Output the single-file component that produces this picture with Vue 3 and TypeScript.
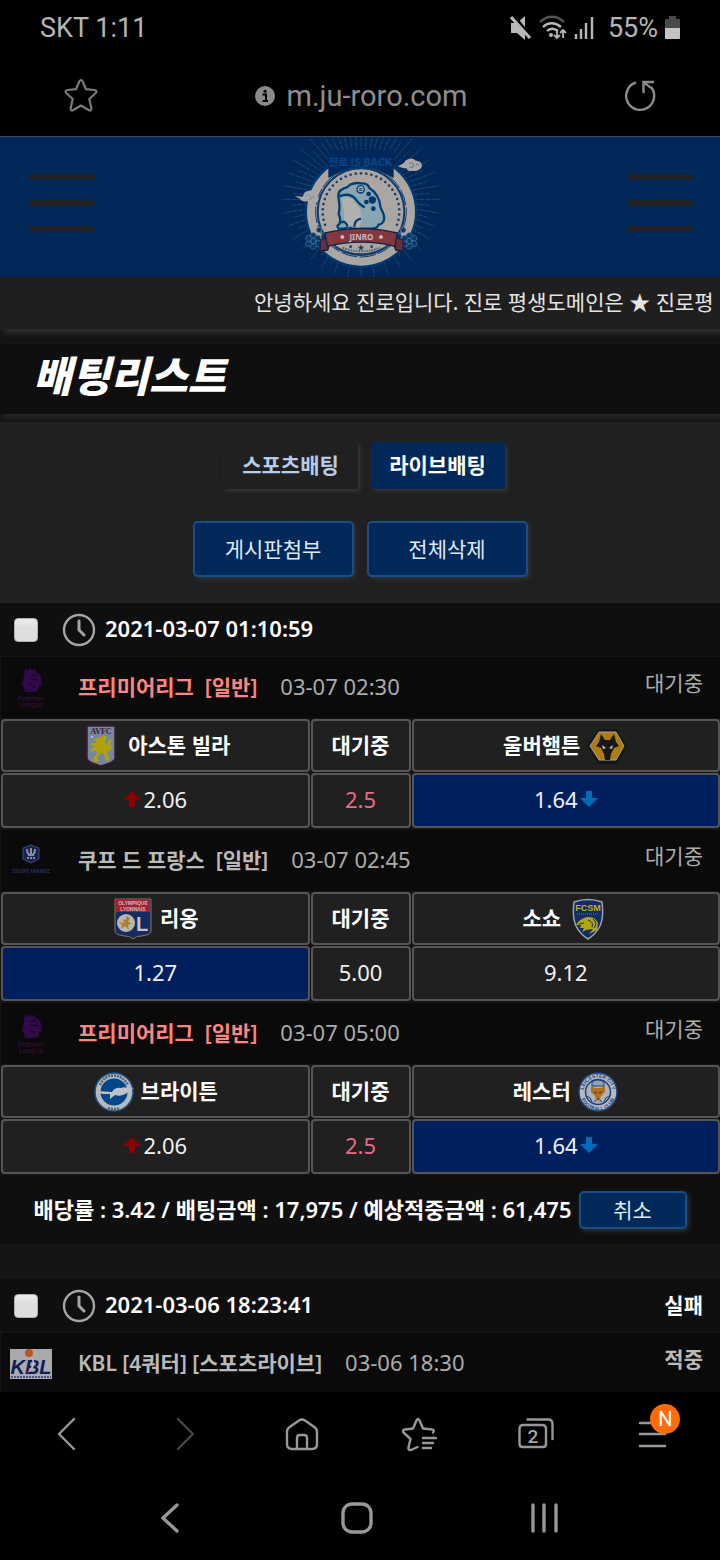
<script setup lang="ts">
type Trend = 'up' | 'down'
type Side = 'home' | 'draw' | 'away'

interface Odd {
  side: Side
  value: string
  trend?: Trend
  line?: boolean
  picked?: boolean
}

interface Match {
  id: number
  badge: string
  league: string
  highlight: boolean
  time: string
  status: string
  home: { name: string; crest: string }
  away: { name: string; crest: string }
  odds: Odd[]
}

const handicap: Odd[] = [
  { side: 'home', value: '2.06', trend: 'up' },
  { side: 'draw', value: '2.5', line: true },
  { side: 'away', value: '1.64', trend: 'down', picked: true },
]

const matches: Match[] = [
  {
    id: 1,
    badge: 'premier',
    league: '프리미어리그\u00a0 [일반]',
    highlight: true,
    time: '03-07 02:30',
    status: '대기중',
    home: { name: '아스톤 빌라', crest: 'villa' },
    away: { name: '울버햄튼', crest: 'wolves' },
    odds: handicap,
  },
  {
    id: 2,
    badge: 'coupe',
    league: '쿠프 드 프랑스\u00a0 [일반]',
    highlight: false,
    time: '03-07 02:45',
    status: '대기중',
    home: { name: '리옹', crest: 'lyon' },
    away: { name: '소쇼', crest: 'sochaux' },
    odds: [
      { side: 'home', value: '1.27', picked: true },
      { side: 'draw', value: '5.00' },
      { side: 'away', value: '9.12' },
    ],
  },
  {
    id: 3,
    badge: 'premier',
    league: '프리미어리그\u00a0 [일반]',
    highlight: true,
    time: '03-07 05:00',
    status: '대기중',
    home: { name: '브라이튼', crest: 'brighton' },
    away: { name: '레스터', crest: 'leicester' },
    odds: handicap,
  },
]

const polar = (cx: number, cy: number, r: number, deg: number) => {
  const a = (deg * Math.PI) / 180
  return { x: cx + r * Math.cos(a), y: cy + r * Math.sin(a) }
}

// Sunburst behind the emblem
const rays = Array.from({ length: 72 }, (_, i) => {
  const a = polar(270, 208, 140, i * 5)
  const b = polar(270, 208, i % 2 ? 205 : 236, i * 5)
  return { x1: a.x, y1: a.y, x2: b.x, y2: b.y }
})

// Row of small stars inside the emblem ring
const studs = Array.from({ length: 29 }, (_, i) => polar(270, 245, 115, 160 + i * (220 / 28)))
const petals = [0, 60, 120, 180, 240, 300]
</script>

<template>
  <div class="screen">
    <header class="status">
      <span>SKT 1:11</span>
      <div class="status-icons">
        <svg width="22" height="24" viewBox="0 0 22 24" aria-hidden="true">
          <path d="M1 7h6l8-7v24l-8-7H1z" fill="#b8b8b8" />
          <path d="M4 0l18 22" stroke="#000" stroke-width="3" />
          <path d="M1 1l19 21" stroke="#b8b8b8" stroke-width="3" />
        </svg>
        <svg width="28" height="26" viewBox="0 0 28 26" fill="none" stroke="#b8b8b8" stroke-width="2.4" aria-hidden="true">
          <path d="M1 7C8 0 18 0 25 7" stroke="#555" />
          <path d="M4 12c5-5 12-5 18 0M8 16c3-3 7-3 11 0" />
          <circle cx="12" cy="20" r="2" fill="#b8b8b8" stroke="none" />
          <path d="M18 15v8M15 20l3 3 3-3M24 23v-8M21 18l3-3 3 3" stroke-width="1.8" />
        </svg>
        <svg width="20" height="24" viewBox="0 0 20 24" stroke="#b8b8b8" stroke-width="2.4" aria-hidden="true">
          <path d="M2 18v5M7 13v10M12 7v16M18 1v22" />
        </svg>
        <span class="battery-text">55%</span>
        <svg width="15" height="24" viewBox="0 0 15 24" aria-hidden="true">
          <path d="M4 0h7v3H4zM0 3h15v10H0z" fill="#4a4a4a" />
          <path d="M0 12h15v10q0 1-1 1H1q-1 0-1-1z" fill="#c4c4c4" />
        </svg>
      </div>
    </header>

    <div class="urlbar">
      <button class="icon-btn" aria-label="즐겨찾기 추가">
        <svg width="36" height="36" viewBox="0 0 36 36" fill="none" stroke="#7a7a7a" stroke-width="2.2" stroke-linejoin="round" aria-hidden="true">
          <path d="M16.300 3.500Q18 0.500 19.700 3.500L23 11.200L31.500 12Q35 12.700 32.500 15.200L26.300 21L28.300 30Q28.600 33.600 25.500 32L18 27.500L10.500 32Q7.400 33.600 7.700 30L9.700 21L3.500 15.200Q1 12.700 4.500 12L13 11.200Z" />
        </svg>
      </button>
      <div class="address">
        <svg width="20" height="20" viewBox="0 0 20 20" aria-hidden="true">
          <circle cx="10" cy="10" r="10" fill="#8a8a8a" />
          <circle cx="10" cy="5.300" r="1.600" fill="#000" />
          <path d="M7.500 8.500h3.500v6.500M7.500 15h5.500" fill="none" stroke="#000" stroke-width="2" />
        </svg>
        <span>m.ju-roro.com</span>
      </div>
      <button class="icon-btn" aria-label="새로고침">
        <svg width="34" height="34" viewBox="0 0 34 34" fill="none" stroke="#8c8c8c" stroke-width="2.400" aria-hidden="true">
          <path d="M13 3.500A14 14 0 1 0 28 8M20.500 14V3H31M21 4q4 2 7 5" />
        </svg>
      </button>
    </div>

    <main class="page">
      <div class="masthead">
        <button class="burger" aria-label="메뉴"><i></i><i></i><i></i></button>
        <svg class="emblem" width="180" height="140" viewBox="0 21 540 420" role="img" aria-label="JINRO">
          <g stroke="#486684" stroke-width="3" stroke-dasharray="15 3" opacity=".5">
            <line v-for="(r, i) in rays" :key="i" v-bind="r" />
          </g>
          <circle cx="270" cy="245" r="169" fill="#003a72" />
          <circle cx="270" cy="245" r="162" fill="#aca6a3" />
          <path d="M172 60h196v84q-98-56-196 0z" fill="#00295b" />
          <circle cx="270" cy="245" r="130" fill="#aca6a3" stroke="#0b3c70" stroke-width="6" />
          <circle cx="270" cy="245" r="136" fill="none" stroke="#0b3c70" stroke-width="3" stroke-dasharray="50 6" />
          <circle v-for="(s, i) in studs" :key="i" :cx="s.x" :cy="s.y" r="4" fill="#1b4069" />
          <text x="268" y="108" text-anchor="middle" class="arch">진로 IS BACK</text>
          <path d="M380 108q18-4 25-18 20-10 29 2 22 0 18 20-10 14-28 10-14 4-18-8-14 2-26-6z" fill="#a9a7a7" />
          <path d="M414 102q9-8 13 2t-10 8M435 103q7-3 8 4" fill="none" stroke="#5c7391" stroke-width="3" />
          <path d="M71 198l24 2q4-18 20-18 17-5 23 10 10 16-2 26-18 6-27-4-18 2-22-8z" fill="#a9a7a7" />
          <path d="M104 200q8-10 15 0t-8 9M123 199q8 0 7 8" fill="none" stroke="#8090a4" stroke-width="3" />
          <path d="M203 207q-6-22 14-31 13-3 22-13 20-6 32-3 20-1 24 14 30 18 34 60 13 22 10 36-4 12-16 14-4 12-20 12h-58q-8 0-12-8-6 8-14 8h-16q-9-8 3-15 4-16-3-30 5-18 0-44z" fill="#8aa5b2" stroke="#003e73" stroke-width="7" stroke-linejoin="round" />
          <path d="M212 204q28-9 40 14 21 24 20 46l-6 28q-18 2-24-8-4 8-14 8-10-12-8-32-2-28-8-56z" fill="#b2afae" />
          <path d="M205 199q30-12 48 7 12 18 28 26M210 278q13-9 20 12M250 290q0-20 20-24" fill="none" stroke="#003e73" stroke-width="7" />
          <circle cx="269" cy="178" r="11" fill="#a4b2b6" stroke="#003e73" stroke-width="4" />
          <path d="M264 176h10M264 181h10" stroke="#003e73" stroke-width="3" />
          <g fill="#00396d"><circle cx="293" cy="192" r="7" /><circle cx="304" cy="210" r="11" /><circle cx="286" cy="216" r="7" /><circle cx="307" cy="236" r="7" /></g>
          <path d="M190 348q80 48 160 0" fill="none" stroke="#16456f" stroke-width="4" />
          <path d="M215 353q55 22 112 0" fill="none" stroke="#47617c" stroke-width="5" stroke-dasharray="5 3" />
          <g v-for="x in [127, 415]" :key="x" :transform="`translate(${x} 333)`">
            <ellipse v-for="p in petals" :key="p" :transform="`rotate(${p})`" cx="0" cy="-15" rx="9" ry="10" fill="#053c70" stroke="#4f6e8c" stroke-width="2" />
            <circle r="8" fill="#053c70" stroke="#899dae" stroke-width="3" stroke-dasharray="3 2" />
          </g>
          <g fill="#08396e" stroke="#7d8fa0" stroke-width="2"><circle cx="144" cy="300" r="8" /><circle cx="160" cy="319" r="10" /><circle cx="397" cy="300" r="8" /><circle cx="382" cy="319" r="10" /></g>
          <path d="M148 330l28-12v24l-6 18q-12 0-23 5zM396 330l-28-12v24l6 18q12 0 23 5z" fill="#6b2d39" stroke="#0d2547" stroke-width="4" />
          <path d="M162 309q108-26 217 0l-7 40q-101-25-203 0z" fill="#853740" stroke="#0d2547" stroke-width="4" />
          <circle cx="214" cy="321" r="6" fill="#c5b9b7" /><circle cx="330" cy="321" r="6" fill="#c5b9b7" />
          <text x="271" y="329" text-anchor="middle" class="ribbon">JINRO</text>
          <path d="M270 343l3 7h7l-6 5 2 7-6-4-6 4 2-7-6-5h7z" fill="#123c6b" />
          <circle cx="239" cy="350" r="4" fill="#123c6b" /><circle cx="302" cy="350" r="4" fill="#123c6b" />
        </svg>
        <button class="burger" aria-label="내 정보"><i></i><i></i><i></i></button>
      </div>

      <div class="notice">안녕하세요 진로입니다. 진로 평생도메인은 ★ 진로평</div>
      <div class="title"><h1>배팅리스트</h1></div>

      <section class="controls">
        <div class="tabs">
          <button class="tab">스포츠배팅</button>
          <button class="tab active">라이브배팅</button>
        </div>
        <div class="actions">
          <button class="btn large">게시판첨부</button>
          <button class="btn large">전체삭제</button>
        </div>
      </section>

      <section class="slip">
        <div class="slip-head">
          <input id="slip-1" type="checkbox" />
          <svg width="34" height="34" viewBox="0 0 34 34" fill="none" stroke="#a5a5a5" aria-hidden="true">
            <circle cx="17" cy="17" r="15" stroke-width="2.400" /><path d="M17 8v9l5 5" stroke-width="3" stroke-linecap="round" />
          </svg>
          <label for="slip-1">2021-03-07 01:10:59</label>
        </div>

        <article v-for="m in matches" :key="m.id">
          <div class="league">
            <svg v-if="m.badge === 'premier'" class="badge" viewBox="0 0 42 42" aria-hidden="true">
              <path d="M15 1l2 3 3-3 2 3 3-3 0 4q7 2 6 8l1 5-3 1-1 5-6 1-7 0-1-4-2-4 2-8z" fill="#32094a" />
              <path d="M21 8q5-1 7 2M21 12l6 1M19 17q5 1 6 4" fill="none" stroke="#0d0812" stroke-width="1" />
              <text x="21" y="34" text-anchor="middle" class="tiny premier">Premier</text>
              <text x="21" y="40" text-anchor="middle" class="tiny premier">League</text>
            </svg>
            <svg v-else class="badge" viewBox="0 0 42 42" aria-hidden="true">
              <path d="M13 8l8-3 8 3v11l-8 4-8-4z" fill="#142254" stroke="#444a6c" />
              <path d="M17 9q0 6 4 6t4-6M21 8v7M18 15h6" fill="none" stroke="#8a8ea5" stroke-width="2" />
              <path d="M17 18h8" stroke="#8a8ea5" stroke-width="2" stroke-dasharray="2 1" />
              <text x="21" y="33" text-anchor="middle" class="tiny coupe">COUPE FRANCE</text>
            </svg>
            <strong :class="{ hot: m.highlight }">{{ m.league }}</strong>
            <time>{{ m.time }}</time>
            <span class="state">{{ m.status }}</span>
          </div>
          <table>
            <colgroup><col /><col class="mid" /><col /></colgroup>
            <thead>
              <tr>
                <th scope="col">
                  <div class="team">
                    <svg v-if="m.home.crest === 'villa'" class="crest" viewBox="0 0 42 42" aria-hidden="true">
                      <path d="M7 1h28v32q0 4-14 8-14-4-14-8z" fill="#71889e" stroke="#431931" stroke-width="1.500" />
                      <text x="21" y="9" text-anchor="middle" class="avfc">AVFC</text>
                      <path d="M20 12q5-3 7 1l-2 4 2 3 2-5 4-1-3 5 2 4-3 4-2-3 1 6 2 5-4 1-2-7-4-1-3 5 2 3-5 1-1-3 4-6-1-3-4 2-2-2 6-4-5 0 0-3 6 0-3-4 3-1z" fill="#b1a10c" />
                      <circle cx="12" cy="12" r="1" fill="#cbd1d1" />
                    </svg>
                    <svg v-else-if="m.home.crest === 'lyon'" class="crest" viewBox="0 0 42 42" aria-hidden="true">
                      <path d="M3 1h36v32q0 4-10 5-5 0-8 3-3-3-8-3-10-1-10-5z" fill="#142c61" stroke="#85774e" />
                      <path d="M4 2h34v12H4z" fill="#a5202c" />
                      <text x="21" y="7" text-anchor="middle" class="ol-name">OLYMPIQUE</text>
                      <text x="21" y="13" text-anchor="middle" class="ol-name">LYONNAIS</text>
                      <circle cx="14" cy="25" r="9" fill="#bcb7ac" />
                      <path d="M14 18l4 2-2 4 4 1-4 2 1 5-4-4-4 3 1-4-3-3 5 1-1-4 3 1z" fill="#a98034" />
                      <text x="24" y="33" class="ol-letter">L</text>
                    </svg>
                    <svg v-else class="crest" viewBox="0 0 42 42" aria-hidden="true">
                      <circle cx="21" cy="21" r="19" fill="#b7b9bd" stroke="#165185" stroke-width="1.500" />
                      <path d="M7 14Q12 4 21 4.500T35 14M15 37q6 2 12 0" fill="none" stroke="#47637e" stroke-width="2.500" stroke-dasharray="2 1" />
                      <circle cx="21" cy="21" r="13.500" fill="#00468a" />
                      <path d="M4 20l15 1q3-5 9-4 4-2 9 1l4-1-7 5q-6 4-12 2l-5 4 0-5-8 0z" fill="#bfc3c7" />
                    </svg>
                    <span>{{ m.home.name }}</span>
                  </div>
                </th>
                <th scope="col"><div class="team"><span>대기중</span></div></th>
                <th scope="col">
                  <div class="team">
                    <span>{{ m.away.name }}</span>
                    <svg v-if="m.away.crest === 'wolves'" class="crest" viewBox="0 0 42 42" aria-hidden="true">
                      <path d="M12 4h19l10 17-10 18H12L1 21z" fill="#161616" />
                      <path d="M13 7h17l8 14-8 14H13L4 21z" fill="#ad7d12" stroke="#aaa28c" />
                      <path d="M15 9l4 6h5l4-6 2 8 3 4-5 2-3 6-1 6h-5l-1-6-3-6-5-2 3-4z" fill="#191817" />
                      <path d="M16 20l4 3-3 1zM27 20l-4 3 3 1z" fill="#c2c0ba" />
                    </svg>
                    <svg v-else-if="m.away.crest === 'sochaux'" class="crest" viewBox="0 0 42 42" aria-hidden="true">
                      <path d="M7 4q14-5 28 0 2 15-2 24-4 8-12 13-8-5-12-13-4-9-2-24z" fill="#122d60" stroke="#9ba3b7" stroke-width="1.500" />
                      <text x="21" y="13" text-anchor="middle" class="fcsm">FCSM</text>
                      <path d="M10 16h22" stroke="#63708d" stroke-dasharray="1 1" />
                      <path d="M9 27q3-6 11-8 8-1 11 6l-1 7-8 4 4-5-7 1-4 2 2-4-4 0 1-3z" fill="#b1a125" />
                      <path d="M12 26l5-1M21 22q6 2 4 7M26 21q5 4 1 9" fill="none" stroke="#122d60" />
                    </svg>
                    <svg v-else class="crest" viewBox="0 0 42 42" aria-hidden="true">
                      <defs>
                        <path id="ring-top" d="M6.500 21A14.500 14.500 0 0 1 35.500 21" />
                        <path id="ring-base" d="M3.500 22A17.500 17.500 0 0 0 38.500 22" />
                      </defs>
                      <circle cx="21" cy="21" r="19" fill="#b8babd" stroke="#1d4382" stroke-width="1.500" />
                      <text class="ring"><textPath href="#ring-top" startOffset="50%" text-anchor="middle">LEICESTER CITY</textPath></text>
                      <text class="ring"><textPath href="#ring-base" startOffset="50%" text-anchor="middle">FOOTBALL CLUB</textPath></text>
                      <circle cx="21" cy="21" r="12.500" fill="#aeb3b9" stroke="#1c4281" stroke-width="1.500" />
                      <path d="M15 11q6-4 12 0v4H15zM10 25q4 1 5 6M32 25q-4 1-5 6M17 31l4-4 4 4" fill="#90a0b5" stroke="#1c4281" />
                      <path d="M14 15l4 2h6l4-2 0 6-4 4-1 4h-4l-1-4-4-4z" fill="#b16f20" />
                      <path d="M17 21l3 1M25 21l-3 1M20 28h2" stroke="#542f15" />
                    </svg>
                  </div>
                </th>
              </tr>
            </thead>
            <tbody>
              <tr>
                <td v-for="o in m.odds" :key="o.side" :class="{ picked: o.picked, line: o.line }">
                  <div class="odd">
                    <svg v-if="o.trend === 'up'" width="18" height="18" viewBox="0 0 18 18" aria-hidden="true"><path d="M9 0l9 9h-6v7H6V9H0z" fill="#8b0000" /></svg>
                    <span>{{ o.value }}</span>
                    <svg v-if="o.trend === 'down'" width="18" height="18" viewBox="0 0 18 18" aria-hidden="true"><path d="M9 16l9-9h-6V0H6v7H0z" fill="#006cb5" /></svg>
                  </div>
                </td>
              </tr>
            </tbody>
          </table>
        </article>

        <div class="summary">
          <strong>배당률 : 3.42 / 배팅금액 : 17,975 / 예상적중금액 : 61,475</strong>
          <button class="btn small">취소</button>
        </div>
      </section>

      <section class="slip">
        <div class="slip-head">
          <input id="slip-2" type="checkbox" />
          <svg width="34" height="34" viewBox="0 0 34 34" fill="none" stroke="#a5a5a5" aria-hidden="true">
            <circle cx="17" cy="17" r="15" stroke-width="2.400" /><path d="M17 8v9l5 5" stroke-width="3" stroke-linecap="round" />
          </svg>
          <label for="slip-2">2021-03-06 18:23:41</label>
          <b class="result">실패</b>
        </div>
        <div class="league">
          <svg class="badge" viewBox="0 0 42 42" aria-hidden="true">
            <path d="M0 6h42v30H0z" fill="#aaa9ac" />
            <text x="21" y="31" text-anchor="middle" class="kbl">KBL</text>
            <path d="M17 30q9-9 3-19 10 12-3 19z" fill="#b7b7ba" />
            <circle cx="19" cy="10" r="4" fill="#ba551d" />
            <path d="M1 34h40" stroke="#4c547c" stroke-width="2" stroke-dasharray="2 1" />
          </svg>
          <strong>KBL [4쿼터] [스포츠라이브]</strong>
          <time>03-06 18:30</time>
          <b class="state">적중</b>
        </div>
      </section>
    </main>

    <nav class="toolbar" aria-label="브라우저">
      <button aria-label="뒤로"><svg width="36" height="36" viewBox="0 0 36 36"><path d="M25 3L10 18l15 15" /></svg></button>
      <button class="dim" aria-label="앞으로"><svg width="36" height="36" viewBox="0 0 36 36"><path d="M12 3l15 15-15 15" /></svg></button>
      <button aria-label="홈"><svg width="36" height="36" viewBox="0 0 36 36"><path d="M4 16Q4 13 6 11.500L16 4.500q3-2 6 0l10 7q2 1.500 2 4.500v12q0 5-5 5H9q-5 0-5-5zM14 33V22q0-3 3-3h4q3 0 3 3v11" /></svg></button>
      <button aria-label="북마크"><svg width="36" height="36" viewBox="0 0 36 36"><path d="M16.500 31L10 34q-3 .5-2.500-2.500l2-8.500-7-6.500q-1.500-2.500 1.500-3l8-1 3.500-8q1.500-3 3 0l3.500 8 9 1q3 .5 1 3M22 22h13M22 27h10M22 32h8" /></svg></button>
      <button aria-label="탭 2개"><svg width="36" height="36" viewBox="0 0 36 36"><path d="M9.500 3.500H30q4.500 0 4.500 4.500v15M5 9h19q4 0 4 4v15q0 3-3 3H5q-3.500 0-3.500-3V13q0-4 3.500-4z" /><text x="15" y="27" text-anchor="middle" class="count">2</text></svg></button>
      <button aria-label="더보기"><svg width="36" height="36" viewBox="0 0 36 36"><path d="M5 7h25M5 18h25M5 30h25" /></svg><span class="new">N</span></button>
    </nav>

    <nav class="sysbar" aria-label="시스템">
      <button aria-label="이전"><svg width="36" height="36" viewBox="0 0 36 36"><path d="M25 5L11 18l14 13" /></svg></button>
      <button aria-label="홈 화면"><svg width="36" height="36" viewBox="0 0 36 36"><rect x="4" y="4" width="28" height="28" rx="9" /></svg></button>
      <button aria-label="최근 앱"><svg width="36" height="36" viewBox="0 0 36 36"><path d="M7 5v26M18 5v26M30 5v26" /></svg></button>
    </nav>
  </div>
</template>

<style>
body {
  background: #000;
}
</style>

<style scoped>
* {
  box-sizing: border-box;
}
.screen {
  display: flex;
  flex-direction: column;
  height: 100vh;
  overflow: hidden;
  background: #000;
  color: #fff;
  font-family: "Noto Sans", "Noto Sans CJK KR", sans-serif;
  font-size: 22px;
}
button {
  margin: 0;
  padding: 0;
  border: 0;
  background: none;
  color: inherit;
  font: inherit;
}
svg {
  display: block;
  flex: none;
}
.status {
  display: flex;
  flex: none;
  align-items: center;
  justify-content: space-between;
  height: 56px;
  padding: 0 40px;
  color: #b5b5b5;
  font-family: Roboto, sans-serif;
  font-size: 27px;
}
.status-icons {
  display: flex;
  align-items: center;
  gap: 7px;
}
.battery-text {
  padding-left: 7px;
}
.urlbar {
  display: flex;
  flex: none;
  align-items: center;
  justify-content: space-between;
  height: 81px;
  padding: 0 63px;
  border-bottom: 1px solid #3c4c62;
}
.address {
  display: flex;
  align-items: center;
  gap: 12px;
  color: #8e8e8e;
  font-family: Roboto, sans-serif;
  font-size: 29px;
}
.page {
  flex: 1;
  min-height: 0;
  overflow: hidden;
  background: #151515;
}
.masthead {
  display: flex;
  align-items: center;
  justify-content: space-between;
  height: 140px;
  padding: 0 27px 0 29px;
  background: #002859;
}
.burger {
  display: flex;
  flex-direction: column;
  gap: 20px;
  padding-bottom: 8px;
}
.burger i {
  width: 66px;
  height: 6px;
  border-radius: 3px;
  background: #202225;
}
.arch {
  fill: #084383;
  font: 900 32px "Noto Sans CJK KR", sans-serif;
}
.ribbon {
  fill: #c5b9b7;
  font: 700 24px "Noto Sans", sans-serif;
}
.notice {
  height: 52px;
  padding-left: 254px;
  overflow: hidden;
  background: #1f1f1f;
  box-shadow: 4px 4px 6px #303030;
  color: #e4e4e4;
  font-size: 21px;
  line-height: 50px;
  white-space: nowrap;
}
.title {
  height: 70px;
  margin: 15px 0 8px;
  padding-left: 33px;
  background: #0f0f0f;
  box-shadow: 4px 3px 5px #292929;
}
h1 {
  margin: 0;
  font-family: "Noto Sans CJK KR", sans-serif;
  font-size: 42px;
  font-style: italic;
  font-weight: 900;
  line-height: 60px;
}
.controls {
  padding: 20px 0 26px;
  background: #202020;
}
.tabs,
.actions {
  display: flex;
  justify-content: center;
  gap: 13px;
}
.tabs {
  margin-bottom: 32px;
  padding-left: 8px;
}
.tab {
  width: 134px;
  height: 47px;
  padding-bottom: 4px;
  border-radius: 4px 4px 2px 2px;
  background: #202020;
  box-shadow: 2px 2px 4px #383838;
  color: #b7cbea;
  font-size: 21px;
  font-weight: 600;
}
.tab.active {
  background: #002859;
  color: #fff;
}
.btn {
  padding-bottom: 3px;
  border: 2px solid #175089;
  border-radius: 5px;
  background: #002859;
  box-shadow: 2px 2px 5px #303438;
  color: #dfe8f5;
  font-size: 21px;
}
.btn.large {
  width: 161px;
  height: 56px;
}
.btn.small {
  width: 108px;
  height: 38px;
  padding: 0;
  line-height: 32px;
}
.slip {
  margin-bottom: 35px;
  overflow: hidden;
}
.slip-head {
  display: flex;
  align-items: center;
  height: 53px;
  padding: 0 17px 0 14px;
  background: #0f0f0f;
}
.slip-head input {
  width: 24px;
  height: 24px;
  margin: 0 24px 0 0;
  border: 1px solid #b0b0b0;
  border-radius: 4px;
  appearance: none;
  background: linear-gradient(#ededed, #dedede 40%);
}
.slip-head label {
  padding: 0 0 3px 9px;
  font-weight: 600;
}
.result {
  margin-left: auto;
  padding-bottom: 4px;
  font-size: 21px;
}
.league {
  display: flex;
  align-items: center;
  height: 62px;
  margin-left: 1px;
  padding: 0 17px 0 9px;
  border-top: 1px solid #151515;
  background: #0a0a0a;
  color: #bababa;
}
.badge {
  width: 42px;
  height: 42px;
  margin-right: 26px;
}
.league strong {
  padding-bottom: 4px;
  font-size: 21px;
  font-weight: 600;
}
.league .hot {
  color: #ff8582;
}
.league time {
  padding: 0 0 4px 23px;
  color: #acacac;
}
.state {
  margin-left: auto;
  padding-bottom: 11px;
  color: #acacac;
  font-size: 21px;
}
b.state {
  color: #bababa;
  font-weight: 600;
}
.tiny {
  font-family: "Noto Sans", sans-serif;
  font-size: 7px;
}
.premier {
  fill: #380d4e;
}
.coupe {
  fill: #2a2d64;
  font-size: 5px;
  font-weight: 700;
}
.kbl {
  fill: #111e59;
  font: italic 900 20px "Liberation Sans", sans-serif;
}
table {
  width: calc(100% + 1px);
  border-spacing: 1px;
  table-layout: fixed;
}
.mid {
  width: 100px;
}
th,
td {
  padding: 0;
  border: 2px solid #555;
  border-radius: 4px;
  background: #202020;
  text-align: center;
}
th {
  height: 53px;
  font-size: 21px;
  font-weight: 600;
}
td {
  height: 55px;
  color: #f0f0f0;
}
td.picked {
  background: #001f5f;
}
td.line {
  color: #e66a85;
}
.team,
.odd {
  display: flex;
  align-items: center;
  justify-content: center;
}
.team span,
.odd span {
  padding-bottom: 4px;
}
.odd svg {
  margin-bottom: 2px;
}
.team {
  gap: 6px;
}
.odd {
  gap: 2px;
}
.crest {
  width: 42px;
  height: 42px;
}
.avfc {
  fill: #431931;
  font: 700 8px "Liberation Serif", serif;
}
.ol-name {
  fill: #cbbfba;
  font: 700 5px "Liberation Sans", sans-serif;
}
.ol-letter {
  fill: #c3c3c3;
  font: 900 20px "Liberation Sans", sans-serif;
}
.fcsm {
  fill: #c0b020;
  font: 700 9px "Liberation Sans", sans-serif;
}
.ring {
  fill: #1c4281;
  font: 700 5px "Liberation Sans", sans-serif;
}
.summary {
  display: flex;
  align-items: center;
  justify-content: center;
  gap: 7px;
  height: 69px;
  background: #0f0f0f;
}
.summary strong {
  padding-bottom: 4px;
  font-weight: 600;
  white-space: nowrap;
}
.toolbar,
.sysbar {
  display: flex;
  flex: none;
  align-items: center;
  height: 84px;
  background: #000;
}
.toolbar {
  padding: 0 8px;
}
.sysbar {
  padding: 0 82px 0 76px;
}
.toolbar button,
.sysbar button {
  position: relative;
  display: flex;
  flex: 1;
  justify-content: center;
}
.toolbar path {
  fill: none;
  stroke: #989898;
  stroke-linecap: round;
  stroke-linejoin: round;
  stroke-width: 2.4px;
}
.toolbar .dim path {
  stroke: #454545;
}
.sysbar path,
.sysbar rect {
  fill: none;
  stroke: #989898;
  stroke-linecap: round;
  stroke-width: 3.4px;
}
.count {
  fill: #a5a5a5;
  font: 500 19px Roboto, sans-serif;
}
.new {
  position: absolute;
  top: -12px;
  left: calc(50% - 3px);
  width: 30px;
  height: 30px;
  border-radius: 50%;
  background: #ff6b0b;
  color: #fff;
  font: 400 20px/30px Roboto, sans-serif;
  text-align: center;
}
</style>
